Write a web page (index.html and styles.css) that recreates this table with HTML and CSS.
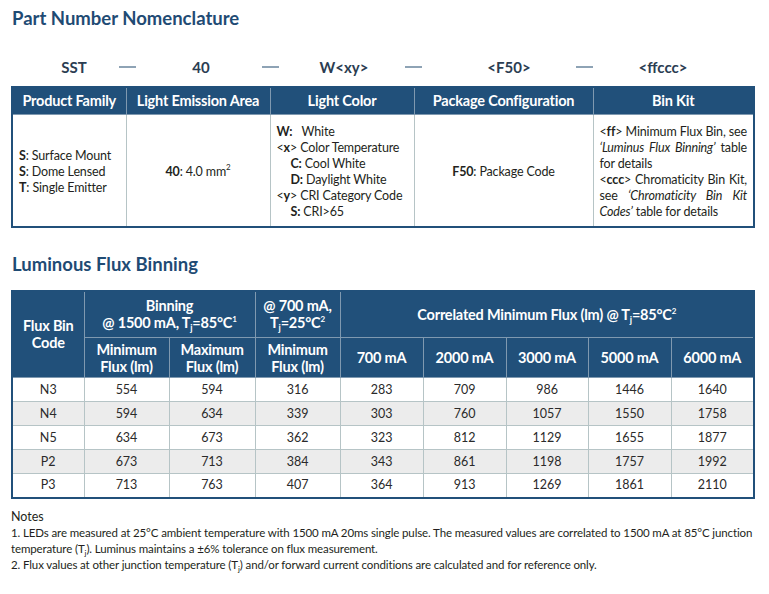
FILE: index.html
```html
<!DOCTYPE html>
<html>
<head>
<meta charset="utf-8">
<link rel="stylesheet" href="styles.css">
</head>
<body>
<div class="page">
  <h1 class="title t1">Part Number Nomenclature</h1>
  <div class="nomen">
    <span class="nm n-sst">SST</span>
    <span class="dash d1"></span>
    <span class="nm n-40">40</span>
    <span class="dash d2"></span>
    <span class="nm n-w">W&lt;xy&gt;</span>
    <span class="dash d3"></span>
    <span class="nm n-f">&lt;F50&gt;</span>
    <span class="dash d4"></span>
    <span class="nm n-b">&lt;ffccc&gt;</span>
  </div>
  <table class="tbl nomtable">
    <colgroup>
      <col class="c114"><col class="c144"><col class="c144"><col class="c179"><col>
    </colgroup>
    <thead>
      <tr><th>Product Family</th><th>Light Emission Area</th><th>Light Color</th><th>Package Configuration</th><th>Bin Kit</th></tr>
    </thead>
    <tbody>
      <tr>
        <td class="left"><div><b>S</b>: Surface Mount</div><div><b>S</b>: Dome Lensed</div><div><b>T</b>: Single Emitter</div></td>
        <td class="center"><b>40</b>: 4.0 mm<sup>2</sup></td>
        <td class="left top">
          <div><b class="wlab">W:</b>White</div>
          <div>&lt;<b>x</b>&gt; Color Temperature</div>
          <div class="ind"><b>C:</b> Cool White</div>
          <div class="ind"><b>D:</b> Daylight White</div>
          <div>&lt;<b>y</b>&gt; CRI Category Code</div>
          <div class="ind"><b>S:</b> CRI&gt;65</div>
        </td>
        <td class="center"><b>F50</b>: Package Code</td>
        <td class="left top">
          <div class="jl">&lt;<b>ff</b>&gt; Minimum Flux Bin, see</div>
          <div class="jl"><i>‘Luminus Flux Binning’</i> table</div>
          <div>for details</div>
          <div class="jl">&lt;<b>ccc</b>&gt; Chromaticity Bin Kit,</div>
          <div class="jl">see <i>‘Chromaticity Bin Kit</i></div>
          <div><i>Codes’</i> table for details</div>
        </td>
      </tr>
    </tbody>
  </table>

  <h2 class="title t2">Luminous Flux Binning</h2>
  <table class="tbl flux">
    <colgroup>
      <col class="f72"><col class="f85"><col class="f86"><col class="f85"><col class="f83"><col class="f83"><col class="f82"><col class="f83"><col>
    </colgroup>
    <thead>
      <tr class="h1">
        <th rowspan="2">Flux Bin<br>Code</th>
        <th colspan="2">Binning<br>@ 1500 mA, T<sub>j</sub>=85°C<sup>1</sup></th>
        <th>@ 700 mA,<br>T<sub>j</sub>=25°C<sup>2</sup></th>
        <th colspan="5">Correlated Minimum Flux (lm) @ T<sub>j</sub>=85°C<sup>2</sup></th>
      </tr>
      <tr class="h2">
        <th>Minimum<br>Flux (lm)</th>
        <th>Maximum<br>Flux (lm)</th>
        <th>Minimum<br>Flux (lm)</th>
        <th>700 mA</th>
        <th>2000 mA</th>
        <th>3000 mA</th>
        <th>5000 mA</th>
        <th>6000 mA</th>
      </tr>
    </thead>
    <tbody>
      <tr><td>N3</td><td>554</td><td>594</td><td>316</td><td>283</td><td>709</td><td>986</td><td>1446</td><td>1640</td></tr>
      <tr class="alt"><td>N4</td><td>594</td><td>634</td><td>339</td><td>303</td><td>760</td><td>1057</td><td>1550</td><td>1758</td></tr>
      <tr><td>N5</td><td>634</td><td>673</td><td>362</td><td>323</td><td>812</td><td>1129</td><td>1655</td><td>1877</td></tr>
      <tr class="alt"><td>P2</td><td>673</td><td>713</td><td>384</td><td>343</td><td>861</td><td>1198</td><td>1757</td><td>1992</td></tr>
      <tr><td>P3</td><td>713</td><td>763</td><td>407</td><td>364</td><td>913</td><td>1269</td><td>1861</td><td>2110</td></tr>
    </tbody>
  </table>

  <div class="notes">
    <div class="nhead">Notes</div>
    <div>1. LEDs are measured at 25°C ambient temperature with 1500 mA 20ms single pulse. The measured values are correlated to 1500 mA at 85°C junction</div>
    <div>temperature (T<sub>j</sub>). Luminus maintains a ±6% tolerance on flux measurement.</div>
    <div>2. Flux values at other junction temperature (T<sub>j</sub>) and/or forward current conditions are calculated and for reference only.</div>
  </div>
</div>
</body>
</html>
```

FILE: styles.css
```css
* { box-sizing: border-box; }

body {
  margin: 0;
  background: #ffffff;
  font-family: Lato, "Open Sans", "Liberation Sans", sans-serif;
  color: #231f20;
}

.page {
  width: 769px;
  padding: 7px 0 0 11px;
}

.title {
  margin: 0;
  font-size: 18.5px;
  line-height: 22px;
  font-weight: 700;
  color: #1f4b74;
  padding-left: 1px;
}

/* nomenclature line */
.nomen {
  display: flex;
  align-items: center;
  height: 18px;
  margin: 29px 0 10px 0;
}
.nm {
  font-size: 15px;
  line-height: 18px;
  font-weight: 700;
  color: #2b3d52;
  text-align: center;
}
.dash {
  display: block;
  width: 17px;
  height: 2px;
  background: #8ea3b5;
}
.n-sst { width: 40px; margin-left: 43px; }
.d1 { margin-left: 25px; }
.n-40 { width: 40px; margin-left: 45px; }
.d2 { margin-left: 41px; }
.n-w { width: 60px; margin-left: 35px; }
.d3 { margin-left: 31px; }
.n-f { width: 60px; margin-left: 57px; }
.d4 { margin-left: 37px; }
.n-b { width: 60px; margin-left: 40px; }

/* tables */
.tbl {
  border-collapse: collapse;
  table-layout: fixed;
  width: 744px;
  border: 2px solid #21507a;
}
.tbl th {
  background: #21507a;
  color: #ffffff;
  font-weight: 700;
  font-size: 14.5px;
  text-align: center;
  border: 1px solid #7f99b0;
  padding: 0;
}
.tbl td {
  border: 1px solid #b6c4c6;
  font-size: 12.5px;
  line-height: 16px;
  text-align: center;
  padding: 0;
}
.tbl sup { font-size: 8px; vertical-align: 6px; line-height: 0; }
.tbl sub { font-size: 9px; vertical-align: -3px; line-height: 0; }

.c114 { width: 114px; }
.c144 { width: 144px; }
.c179 { width: 179px; }

.nomtable thead th {
  height: 27px;
  line-height: 16px;
  letter-spacing: -0.2px;
}
.nomtable td {
  padding: 9px 6px 6px 6px;
  vertical-align: middle;
  letter-spacing: -0.15px;
  white-space: nowrap;
}
.nomtable td.left { text-align: left; }
.nomtable td.top { vertical-align: top; }
.nomtable td.center { text-align: center; }
.wlab { display: inline-block; width: 25px; }
.ind { padding-left: 14px; }
.jl { text-align: justify; text-align-last: justify; white-space: normal; }

.t2 { margin-top: 25px; }

.flux { margin-top: 15px; }
.f72 { width: 72px; }
.f85 { width: 85px; }
.f86 { width: 86px; }
.f82 { width: 82px; }
.f83 { width: 83px; }
.flux th { line-height: 17px; letter-spacing: -0.2px; }
.flux .h1 th { height: 47px; }
.flux .h2 th { height: 40px; }
.flux td { height: 24px; color: #2a2a2a; }
.flux tr.alt td { background: #ececec; }

.notes {
  margin-top: 10px;
  font-size: 11.5px;
  line-height: 16px;
  color: #231f20;
  white-space: nowrap;
  letter-spacing: -0.12px;
}
.notes .nhead { font-size: 12.5px; letter-spacing: 0; }
.notes sub { font-size: 8px; vertical-align: -3px; line-height: 0; }
```
